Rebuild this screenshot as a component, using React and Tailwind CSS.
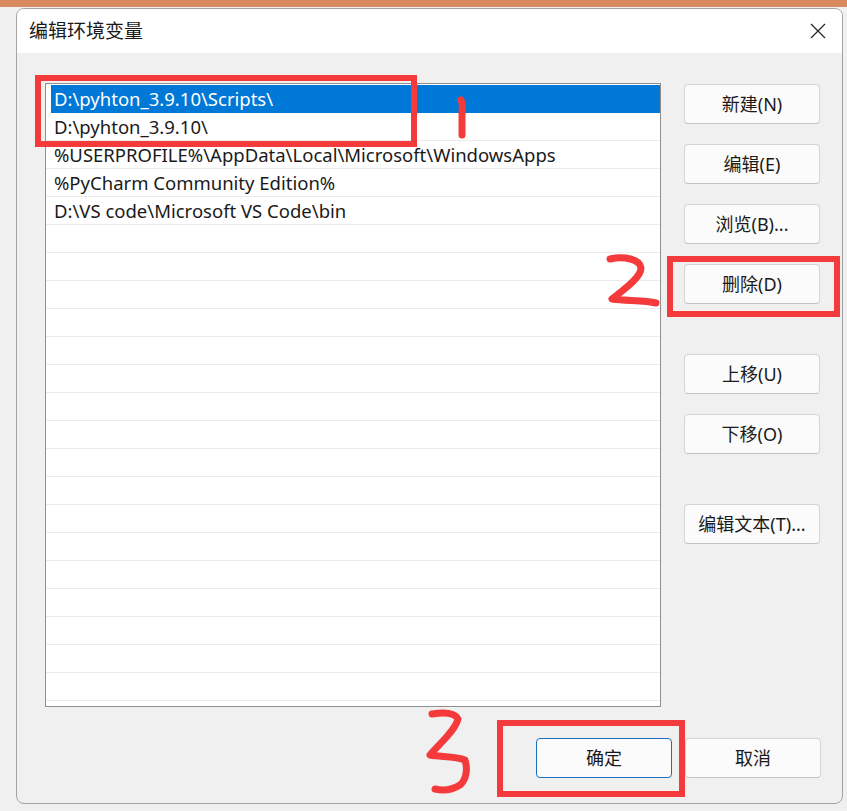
const FONT = { fontFamily: '"Noto Sans", "Noto Sans CJK SC", sans-serif' };

const paths = [
  "D:\\pyhton_3.9.10\\Scripts\\",
  "D:\\pyhton_3.9.10\\",
  "%USERPROFILE%\\AppData\\Local\\Microsoft\\WindowsApps",
  "%PyCharm Community Edition%",
  "D:\\VS code\\Microsoft VS Code\\bin",
];

function Btn({ children, primary, className = "" }) {
  return (
    <button
      className={
        "flex h-[40px] w-[136px] items-center justify-center rounded-[4px] border text-[18px] text-[#1a1a1a] " +
        (primary
          ? "border-[#1f6fbf] bg-[#fbfbfb] "
          : "border-[#d4d4d4] border-b-[#c2c2c2] bg-[#fbfbfb] ") +
        className
      }
    >
      {children}
    </button>
  );
}

function Marks() {
  return (
    <svg
      className="pointer-events-none absolute left-0 top-0"
      width="847"
      height="811"
      viewBox="0 0 847 811"
      fill="none"
      stroke="#f43a3a"
      strokeLinecap="round"
      strokeLinejoin="round"
    >
      {/* boxes */}
      <rect x="38" y="78" width="376" height="66" strokeWidth="6" strokeLinecap="butt" strokeLinejoin="miter" />
      <rect x="670" y="259" width="167" height="55" strokeWidth="6" strokeLinecap="butt" strokeLinejoin="miter" />
      <rect x="500" y="723" width="182" height="71" strokeWidth="6" strokeLinecap="butt" strokeLinejoin="miter" />
      {/* 1 */}
      <path d="M461 100 Q463 104 462 112 L462 135" strokeWidth="7" />
      {/* 2 */}
      <path d="M610 259 C624 256 640 259 641 268 C641 278 622 291 612 299 C626 301 645 300 656 303" strokeWidth="7" />
      {/* 3 */}
      <path d="M432 714 C445 712 455 713 458 719 C455 731 440 743 430 755 C441 757 455 756 465 760 C468 770 466 780 460 785 C452 790 443 791 435 789" strokeWidth="7" />
    </svg>
  );
}

export default function App() {
  const rows = Array.from({ length: 23 }, (_, i) => paths[i] ?? "");

  return (
    <div className="relative h-[811px] w-[847px] overflow-hidden bg-[#f0f0f0]" style={FONT}>
      <div className="h-[7px] bg-[#d98a5e]" />
      <div className="flex pt-[1px]">
        <div className="w-[16px]" />
        <div className="flex h-[796px] w-[827px] flex-col overflow-hidden rounded-[8px] border border-[#a3a3a3] bg-[#f0f0f0]">
          {/* title bar */}
          <div className="flex h-[44px] items-center justify-between bg-white pl-[12px] pr-[16px]">
            <span className="text-[19px] text-[#1a1a1a]">编辑环境变量</span>
            <svg width="16" height="16" viewBox="0 0 16 16" stroke="#222" strokeWidth="1.2">
              <path d="M1 1 L15 15 M15 1 L1 15" />
            </svg>
          </div>

          {/* body */}
          <div className="flex flex-1 flex-col pl-[28px] pr-[21px] pt-[30px]">
            <div className="flex gap-[23px]">
              <div className="h-[624px] w-[616px] overflow-hidden border border-[#8f8f8f] bg-white pt-[1px]">
                {rows.map((p, i) => (
                  <div
                    key={i}
                    className={
                      "flex h-[28px] items-center whitespace-nowrap text-[18.5px] " +
                      (i === 0
                        ? "ml-[5px] bg-[#0078d7] pl-[3px] text-white"
                        : "border-b border-[#ebebeb] pl-[8px] text-[#1a1a1a]")
                    }
                  >
                    {p}
                  </div>
                ))}
              </div>

              <div className="flex flex-col pt-[1px]">
                <Btn>新建(N)</Btn>
                <Btn className="mt-[20px]">编辑(E)</Btn>
                <Btn className="mt-[20px]">浏览(B)...</Btn>
                <Btn className="mt-[20px]">删除(D)</Btn>
                <Btn className="mt-[50px]">上移(U)</Btn>
                <Btn className="mt-[20px]">下移(O)</Btn>
                <Btn className="mt-[50px]">编辑文本(T)...</Btn>
              </div>
            </div>

            <div className="mt-[31px] flex justify-end gap-[13px]">
              <Btn primary>确定</Btn>
              <Btn>取消</Btn>
            </div>
          </div>
        </div>
      </div>
      <Marks />
    </div>
  );
}
